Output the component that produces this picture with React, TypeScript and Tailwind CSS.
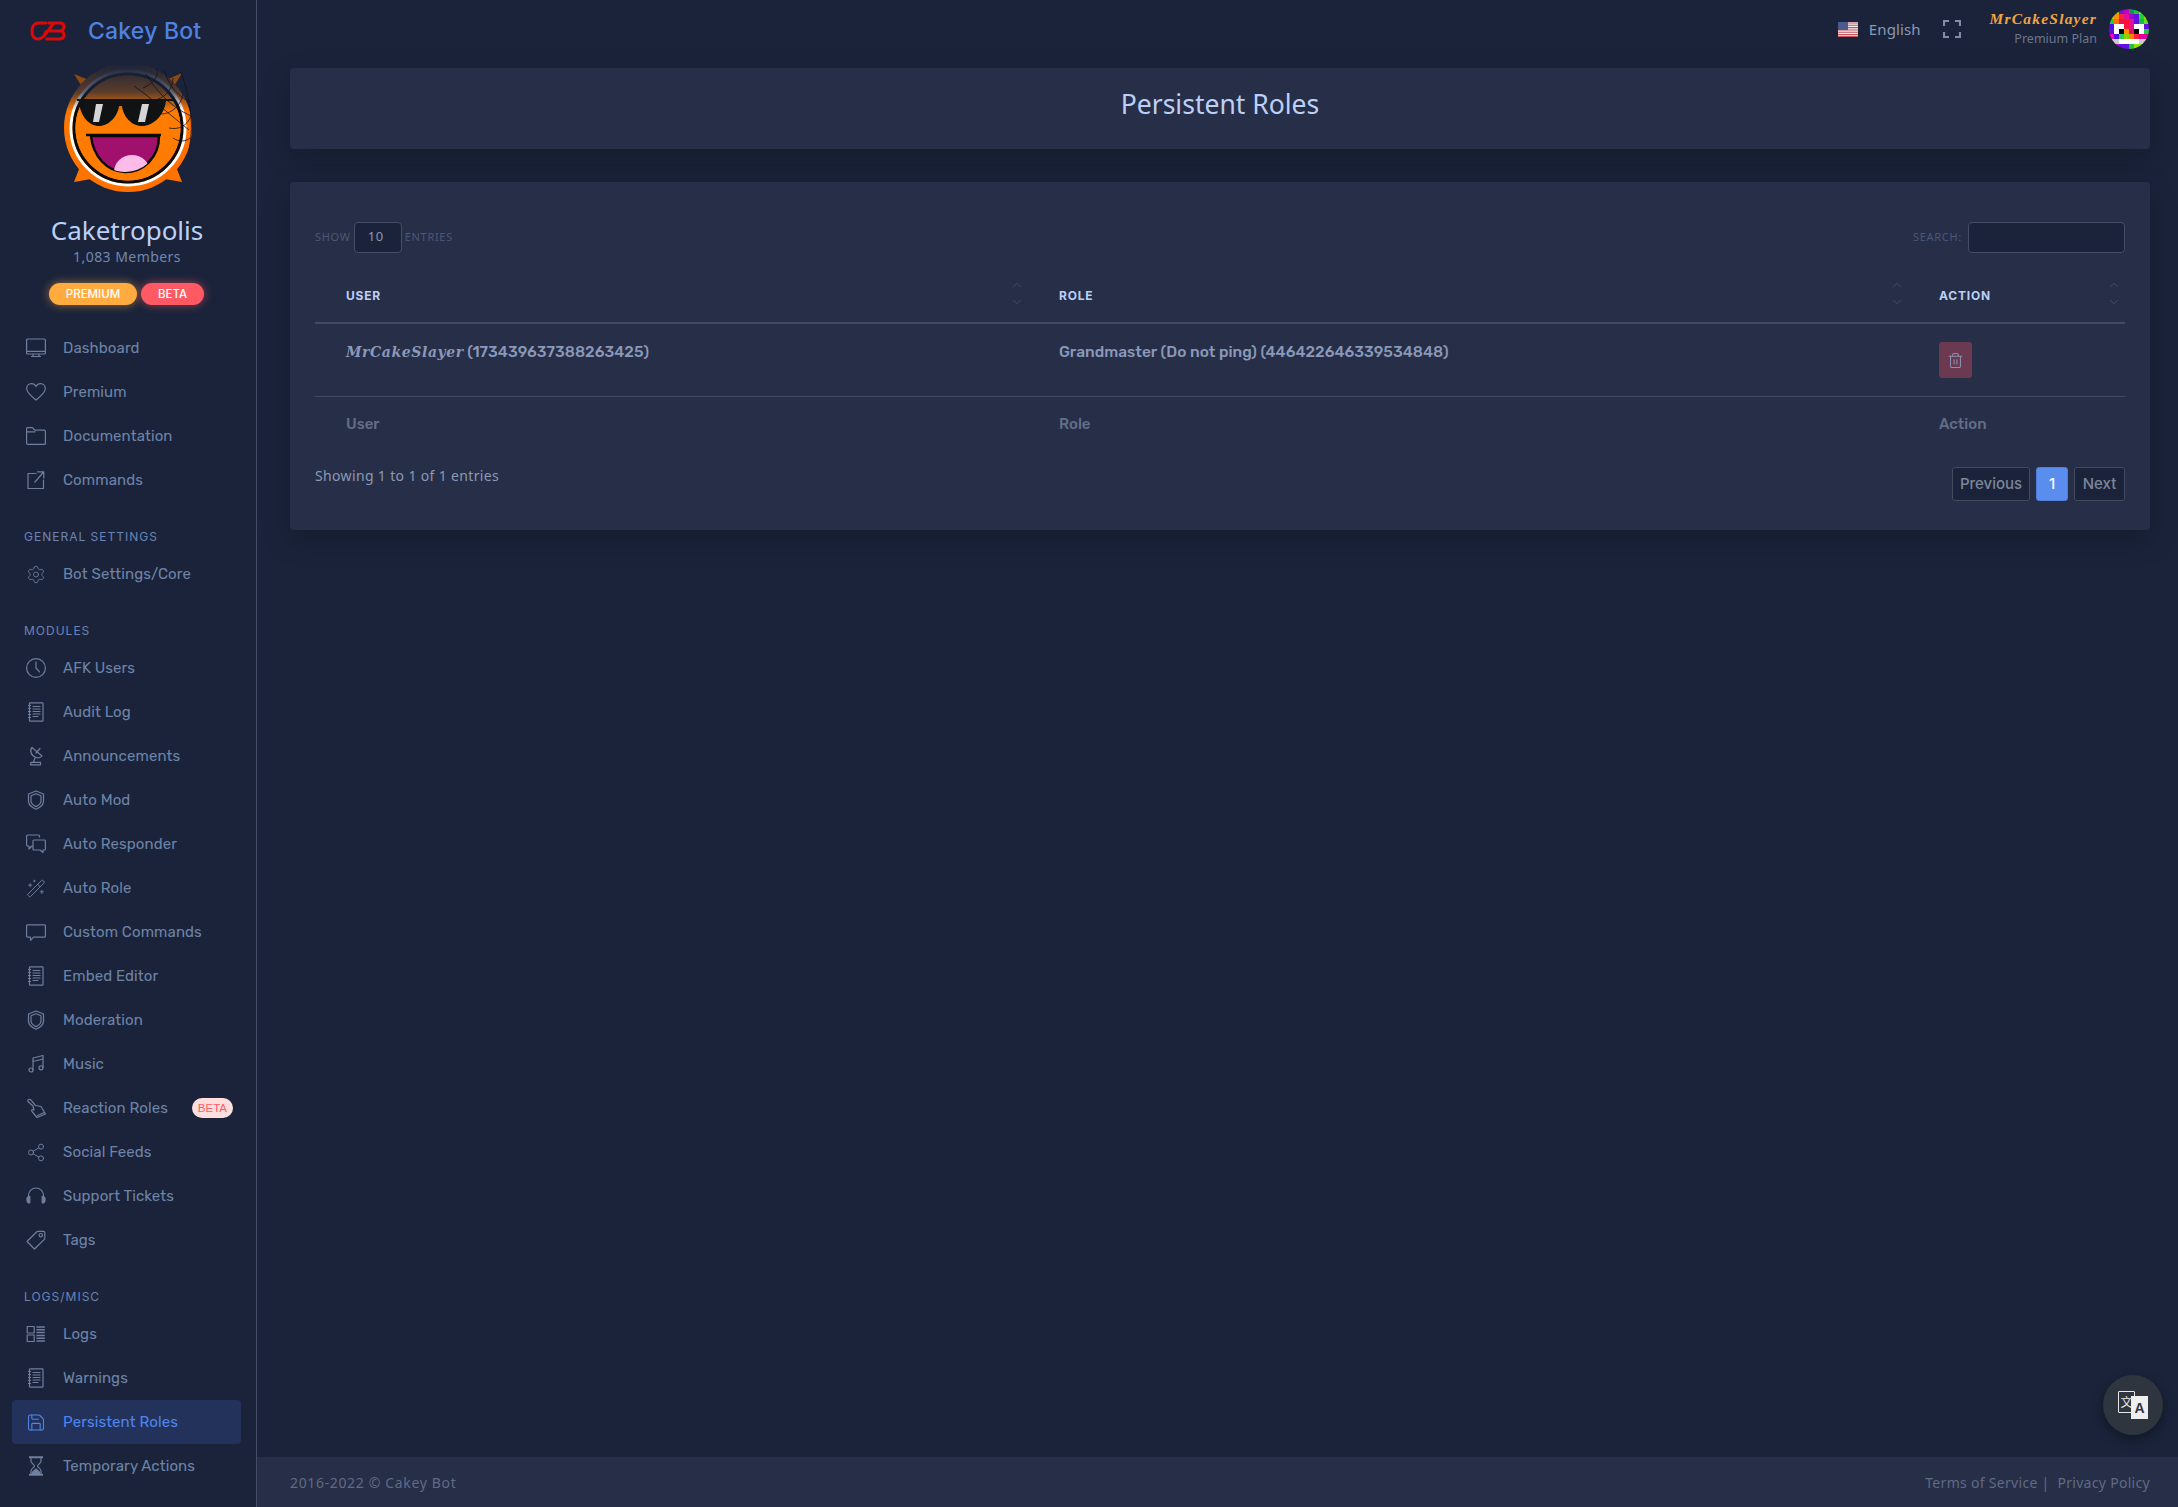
import React from "react";
import { Settings, WandSparkles, Share2, Save, ChevronUp, ChevronDown, Trash2 } from "lucide-react";

const S = ({ children }: { children: React.ReactNode }) => (
  <svg width="20" height="20" viewBox="0 0 20 20" fill="none" stroke="currentColor" strokeWidth="1.2" strokeLinecap="round" strokeLinejoin="round">{children}</svg>
);

const Notebook = () => (
  <S>
    <rect x="3.5" y="0.8" width="13.5" height="18.4" rx="0.8" />
    <path d="M2.5 3.5h2M2.5 6.5h2M2.5 9.5h2M2.5 12.5h2M2.5 15.5h2" />
    <path d="M7 4.5h7M7 7h7M7 9.5h7M7 12h7M7 14.5h5" />
  </S>
);
const ShieldI = () => (
  <S>
    <path d="M10 1 L17.5 4 V11 C17.5 15 13.5 17.8 10 19.2 C6.5 17.8 2.5 15 2.5 11 V4 Z" />
    <path d="M10 3.8 L15 5.8 V10.8 C15 13.6 12.3 15.6 10 16.6 C7.7 15.6 5 13.6 5 10.8 V5.8 Z" />
  </S>
);
const icons: Record<string, React.ReactNode> = {
  monitor: <S><rect x="0.6" y="1" width="18.8" height="15" rx="1" /><path d="M0.6 13.3h18.8M7 16v2M13 16v2M5.5 18.5h9" /></S>,
  heart: <S><path d="M10 18 C6 14.8 0.7 11 0.7 6.6 C0.7 3.5 3 1.6 5.5 1.6 C7.4 1.6 9 2.6 10 4.4 C11 2.6 12.6 1.6 14.5 1.6 C17 1.6 19.3 3.5 19.3 6.6 C19.3 11 14 14.8 10 18 Z" /></S>,
  folder: <S><path d="M0.6 17.2 V2.6 C0.6 2 1 1.6 1.6 1.6 H6.5 L8.5 4.2 H18 C18.8 4.2 19.4 4.8 19.4 5.6 V17.4 C19.4 18 19 18.4 18.4 18.4 H1.8 C1 18.4 0.6 18 0.6 17.2 Z" /><path d="M0.6 5.8 H9" /></S>,
  ext: <S><path d="M10 3.5 H2 V18.5 H17.5 V10" /><path d="M9 12 L17.5 2 M11.5 1.8 H17.8 V8" /></S>,
  gear: <Settings size={23} strokeWidth={1.05} />,
  clock: <S><circle cx="10" cy="10" r="9.4" /><path d="M10 3.8 V10 L13.5 13.8" /></S>,
  notebook: <Notebook />,
  dish: <S><path d="M6 1.5 C3.5 4.5 5 10 10 11.5 C12.5 12.2 15 11.5 16 10 Z" /><path d="M10 7 L14 2.5 M9 12 L7.5 16" /><path d="M4.5 18.8 H14.5 V16.3 H5 Z" /></S>,
  shield: <ShieldI />,
  chats: <S><path d="M13.5 3 V2 C13.5 1.4 13 1 12.5 1 H1.5 C1 1 0.6 1.4 0.6 2 V11 C0.6 11.5 1 12 1.5 12 H3 V15 L6 12 H7" /><path d="M8 6 H18.5 C19 6 19.4 6.4 19.4 7 V15 C19.4 15.6 19 16 18.5 16 H17 V18.5 L14 16 H8 C7.4 16 7 15.6 7 15 V7 C7 6.4 7.4 6 8 6 Z" /></S>,
  wand: <WandSparkles size={21} strokeWidth={1.15} />,
  msg: <S><path d="M1.6 2.8 H18.4 C19 2.8 19.4 3.2 19.4 3.8 V14.2 C19.4 14.8 19 15.2 18.4 15.2 H7.5 L4.5 18.3 V15.2 H1.6 C1 15.2 0.6 14.8 0.6 14.2 V3.8 C0.6 3.2 1 2.8 1.6 2.8 Z" /></S>,
  music: <S><path d="M7 16 V4 L17 1.5 V13.5 M7 7.5 L17 5" /><circle cx="5" cy="16" r="2" /><circle cx="15" cy="13.8" r="2" /></S>,
  hand: <S><path d="M2 3.5 C1.2 2 3.5 0.5 4.8 1.8 L9.5 7.5 L15 8.5 L19.5 16 L11 19.5 L6 13.5 C5 12 6.5 11 8 12 L7 8 Z" /><path d="M11.5 17.5 L18.5 14.5" /></S>,
  share: <Share2 size={21} strokeWidth={1.15} />,
  phones: <S><path d="M2.5 12 V9.5 C2.5 5 6 2 10 2 C14 2 17.5 5 17.5 9.5 V12" /><path d="M1 12.5 C1 11 2 10.5 3.8 10.5 V17 C2 17 1 16 1 14.5 Z M19 12.5 C19 11 18 10.5 16.2 10.5 V17 C18 17 19 16 19 14.5 Z" fill="currentColor" /></S>,
  tag: <S><path d="M1 11.5 L10.5 2 C11 1.5 11.5 1.3 12.2 1.3 H17.6 C18.3 1.3 18.8 1.8 18.8 2.5 V8 C18.8 8.6 18.6 9.2 18.1 9.6 L8.5 19 Z" /><circle cx="14.8" cy="5.2" r="1.7" /></S>,
  logs: <S><rect x="1.2" y="2.5" width="7" height="6.5" /><rect x="1.2" y="11" width="7" height="6.5" /><path d="M10.5 3h8.3M10.5 5.7h8.3M10.5 8.4h8.3M10.5 11.6h8.3M10.5 14.3h8.3M10.5 17h8.3" strokeWidth="1.5" strokeLinecap="butt" /></S>,
  save: <Save size={21} strokeWidth={1.3} />,
  hour: <S><path d="M3 1.2 H17 M3 18.8 H17" strokeWidth="2" strokeLinecap="butt" /><path d="M5 2 V5 C5 7.5 8.5 8.8 8.5 10 C8.5 11.2 5 12.5 5 15 V18 M15 2 V5 C15 7.5 11.5 8.8 11.5 10 C11.5 11.2 15 12.5 15 15 V18" /><path d="M6 17.5 C6 15.5 9 14.5 10 13 C11 14.5 14 15.5 14 17.5 Z" fill="currentColor" /></S>,
};

const NavItem = ({ icon, label, active, badge }: { icon: string; label: string; active?: boolean; badge?: boolean }) => (
  <div className={`flex h-11 items-center rounded-[4px] ml-3 mr-[15px] pl-[14px] pr-2 ${active ? "bg-[#22325a] text-[#4f85ef]" : "text-[#6d83a8]"}`}>
    <span className={`flex w-5 h-5 items-center justify-center shrink-0 ${active ? "text-[#4f85ef]" : "text-[#6f7f9d]"}`}>{icons[icon]}</span>
    <span className="ml-[17px] text-[15px] font-['Rubik','Inter',sans-serif] tracking-[0.1px]">{label}</span>
    {badge && (
      <span className="ml-auto rounded-full bg-[#ffdfdd] text-[#ff5a64] text-[11.5px] leading-[20px] h-5 px-[6px] font-['Liberation_Sans',sans-serif]">BETA</span>
    )}
  </div>
);

const Heading = ({ children }: { children: React.ReactNode }) => (
  <div className="mx-[24px] mt-[26px] mb-[7px] h-[17px] leading-[17px] text-[12px] tracking-[1px] text-[#6d83b3] font-['Inter',sans-serif]">{children}</div>
);

const GuildAvatar = () => (
  <svg width="128" height="127" viewBox="33 15 128 127">
    <defs>
      <radialGradient id="og" cx="0.45" cy="0.45" r="0.7">
        <stop offset="0" stopColor="#ff8a00" />
        <stop offset="1" stopColor="#ff6a00" />
      </radialGradient>
      <linearGradient id="fade" x1="0" y1="0" x2="0" y2="1">
        <stop offset="0" stopColor="#1a233a" stopOpacity="1" />
        <stop offset="0.22" stopColor="#1a233a" stopOpacity="0.72" />
        <stop offset="0.37" stopColor="#1a233a" stopOpacity="0" />
      </linearGradient>
      <clipPath id="mouthClip"><path d="M60 86 H128 C128 108 112 122 94 122 C76 122 62 106 60 86 Z" /></clipPath>
    </defs>
    <path d="M43 24 L68 34 L58 48 Z M151 23 L126 34 L136 48 Z" fill="#8b4a10" />
    <path d="M43 132 L50 114 L66 128 Z M151 132 L144 114 L128 128 Z" fill="#ff7400" />
    <circle cx="97" cy="78" r="64" fill="url(#og)" />
    <circle cx="97" cy="78" r="57" fill="none" stroke="#ffffff" strokeWidth="3" />
    <circle cx="97" cy="78" r="54" fill="none" stroke="#0a0a0a" strokeWidth="3" />
    <circle cx="97" cy="78" r="52.5" fill="#ff7c00" />
    <circle cx="97" cy="78" r="64.5" fill="url(#fade)" />
    <path d="M46 49 H142 V51 H135 C133 66 122 76 111 76 C100 76 92 66 91 56 H88 C87 66 78 76 68 76 C58 76 49 66 48 51 H46 Z" fill="#101214" />
    <path d="M65 54 H72 L68 72 H62 Z M111 54 H118 L114 72 H107 Z" fill="#d5d5d5" />
    <path d="M60 86 H128 C128 108 112 122 94 122 C76 122 62 106 60 86 Z" fill="#a0106c" stroke="#0a0a0a" strokeWidth="2.5" />
    <path d="M55 85 H130" stroke="#0a0a0a" strokeWidth="2.5" />
    <g clipPath="url(#mouthClip)"><ellipse cx="101" cy="122" rx="18" ry="17" fill="#fdbbe9" /></g>
    <g fill="none" stroke="#0d1322" strokeWidth="0.8">
      <path d="M103 36 C120 48 131 58 158 80 M115 24 C125 40 138 56 160 66 M133 20 C138 36 148 48 160 52" />
      <path d="M126 19 C128 26 122 34 112 38 M142 28 C142 40 132 50 122 50 M152 44 C150 56 140 64 130 64 M160 66 C156 76 148 80 138 78 M159 88 C154 92 148 92 142 88" />
      <path d="M150 22 C154 34 158 48 160 66 C161 78 160 90 158 100" />
    </g>
  </svg>
);

const px = [
  ["#22c55e", "#76d80e", "#7a10e0", "#c000c0", "#1a9050", "#20c040", "#90e000", "#30c030"],
  ["#9ee000", "#ff9000", "#ff2040", "#e0109a", "#a000d0", "#6010e0", "#20d040", "#90e000"],
  ["#20d040", "#ff7000", "#f01050", "#ff1030", "#e010a0", "#6010e0", "#10c040", "#60e020"],
  ["#5010e0", "#ffffff", "#ffffff", "#ff1040", "#e01090", "#ffffff", "#ffffff", "#6010e0"],
  ["#6010e0", "#ffffff", "#000000", "#ff9000", "#e01060", "#000000", "#ffffff", "#20d040"],
  ["#ff00c0", "#5010e0", "#20d060", "#90d000", "#ff8000", "#ff2040", "#e000a0", "#e000a0"],
  ["#cccccc", "#cccccc", "#ffffff", "#ffffff", "#ffffff", "#ffffff", "#cccccc", "#cccccc"],
  ["#ff00ff", "#c000e0", "#6010e0", "#6010e0", "#20c040", "#90e000", "#90e000", "#a0e000"],
];

const SortCaret = () => (
  <span className="absolute right-[4px] top-[12px] flex flex-col text-[#424d6a]">
    <ChevronUp size={14} strokeWidth={1.6} />
    <span className="h-[3px]" />
    <ChevronDown size={14} strokeWidth={1.6} />
  </span>
);

const rubik = "font-['Rubik','Inter',sans-serif]";

const PageBtn = ({ children, cls }: { children: React.ReactNode; cls: string }) => (
  <span className={`h-[34px] flex items-center justify-center rounded-[3px] border text-[15px] font-medium font-['Inter',sans-serif] ${cls}`}>{children}</span>
);

export default function App() {
  return (
    <div className="flex h-screen w-full overflow-hidden bg-[#1a233a] font-['Noto_Sans',sans-serif]">
      <aside className="w-[257px] shrink-0 border-r border-[#434e66] flex flex-col">
        <div className="h-[62px] flex items-center pl-[30px]">
          <svg width="36" height="22" viewBox="30 20 36 22" fill="none" stroke="#d80a0a" strokeWidth="3.2" strokeLinecap="round" strokeLinejoin="round">
            <path d="M46 23 H39 C34 23 32 27 32 31 C32 36 34 39 38 39 C42 39 45 35 46 32" />
            <path d="M54 23 L44 36 M49 23 H60 C63 23 64 25 64 27 C64 29 62 31 60 31 H51 M60 31 C63 31 64 33 64 35 C64 38 62 39 59 39 H47" />
          </svg>
          <span className="ml-[22px] text-[23px] font-medium text-[#4f82e0] font-['Inter',sans-serif] tracking-[0.2px]">Cakey Bot</span>
        </div>
        <div className="mt-[3px] flex justify-center pr-[1px]"><GuildAvatar /></div>
        <div className="mt-[20px] pr-[2px] text-center text-[26px] leading-[36px] text-[#bcd0f7]">Caketropolis</div>
        <div className="pr-[2px] text-center text-[14px] leading-[18px] text-[#7188ac] tracking-[0.45px]">1,083 Members</div>
        <div className="mt-[17px] flex justify-center gap-[4px] font-['Inter',sans-serif] font-medium text-[11.5px] text-white pr-[3px]">
          <span className="w-[88px] h-[22px] leading-[22px] text-center rounded-full bg-[#ffab40] shadow-[0_0_10px_rgba(255,171,64,0.55)]">PREMIUM</span>
          <span className="w-[63px] h-[22px] leading-[22px] text-center rounded-full bg-[#ff5a64] shadow-[0_0_10px_rgba(255,90,100,0.55)]">BETA</span>
        </div>
        <nav className="mt-[21px]">
          <NavItem icon="monitor" label="Dashboard" />
          <NavItem icon="heart" label="Premium" />
          <NavItem icon="folder" label="Documentation" />
          <NavItem icon="ext" label="Commands" />
          <Heading>GENERAL SETTINGS</Heading>
          <NavItem icon="gear" label="Bot Settings/Core" />
          <Heading>MODULES</Heading>
          <NavItem icon="clock" label="AFK Users" />
          <NavItem icon="notebook" label="Audit Log" />
          <NavItem icon="dish" label="Announcements" />
          <NavItem icon="shield" label="Auto Mod" />
          <NavItem icon="chats" label="Auto Responder" />
          <NavItem icon="wand" label="Auto Role" />
          <NavItem icon="msg" label="Custom Commands" />
          <NavItem icon="notebook" label="Embed Editor" />
          <NavItem icon="shield" label="Moderation" />
          <NavItem icon="music" label="Music" />
          <NavItem icon="hand" label="Reaction Roles" badge />
          <NavItem icon="share" label="Social Feeds" />
          <NavItem icon="phones" label="Support Tickets" />
          <NavItem icon="tag" label="Tags" />
          <Heading>LOGS/MISC</Heading>
          <NavItem icon="logs" label="Logs" />
          <NavItem icon="notebook" label="Warnings" />
          <NavItem icon="save" label="Persistent Roles" active />
          <NavItem icon="hour" label="Temporary Actions" />
        </nav>
      </aside>

      <main className="flex-1 min-w-0 flex flex-col relative">
        <header className="h-[68px] shrink-0 flex items-center justify-end pr-[29px] pb-[10px]">
          <svg width="20" height="15" viewBox="0 0 20 15" className="mt-[1px]">
            <rect width="20" height="15" fill="#eeeeee" />
            <path d="M0 1h20M0 3.3h20M0 5.6h20M0 8h20M0 10.3h20M0 12.6h20M0 14.6h20" stroke="#c4555f" strokeWidth="1.1" />
            <rect width="10" height="8" fill="#4a5a8c" />
          </svg>
          <span className="ml-[11px] text-[15px] tracking-[0.1px] text-[#8a99b5]">English</span>
          <svg width="18" height="18" viewBox="0 0 18 18" fill="none" stroke="#7d8dab" strokeWidth="2.2" className="ml-[22px]">
            <path d="M1 6 V1 H6 M12 1 H17 V6 M17 12 V17 H12 M6 17 H1 V12" />
          </svg>
          <div className="ml-[29px] mr-[-1px] flex flex-col items-end">
            <span className="text-[15.5px] leading-[20px] font-bold italic text-[#f0a540] tracking-[1.2px] font-['Liberation_Serif',serif]">MrCakeSlayer</span>
            <span className="text-[12.5px] leading-[20px] text-[#6b778f]">Premium Plan</span>
          </div>
          <svg width="40" height="40" viewBox="0 0 8 8" shapeRendering="crispEdges" className="ml-[13px] rounded-full">
            {px.flatMap((row, y) => row.map((c, x) => <rect key={`${x}-${y}`} x={x} y={y} width="1" height="1" fill={c} />))}
          </svg>
        </header>

        <div className="flex-1 min-h-0 pl-[33px] pr-[28px]">
          <section className="h-[81px] rounded-[4px] bg-[#272e48] flex items-center justify-center pb-[8px] shadow-[0_10px_30px_rgba(0,0,0,0.2)]">
            <h1 className="text-[26.5px] text-[#bcd0f7]">Persistent Roles</h1>
          </section>

          <section className="mt-[33px] h-[348px] rounded-[4px] bg-[#272e48] px-[25px] pt-[40px] shadow-[0_10px_30px_rgba(0,0,0,0.2)]">
            <div className="flex items-center justify-between h-[30px]">
              <div className="flex items-center text-[11px] tracking-[0.7px] text-[#4a5876]">
                <span>SHOW</span>
                <span className="mx-[3px] w-[48px] h-[31px] pl-[13px] flex items-center rounded-[4px] border border-[#434e66] bg-[#1a233a] text-[#8a99b5] text-[13px]">10</span>
                <span>ENTRIES</span>
              </div>
              <div className="flex items-center text-[11px] tracking-[0.7px] text-[#4a5876]">
                <span>SEARCH:</span>
                <span className="ml-[6px] w-[157px] h-[31px] rounded-[4px] border border-[#434e66] bg-[#1a233a]" />
              </div>
            </div>

            <table className="mt-[14px] w-full table-fixed border-collapse">
              <colgroup>
                <col className="w-[713px]" />
                <col className="w-[880px]" />
                <col />
              </colgroup>
              <thead>
                <tr className="h-[57px] border-b-2 border-[#434b60]">
                  {["USER", "ROLE", "ACTION"].map((t) => (
                    <th key={t} className="relative text-left pl-[31px] pt-[3px] text-[12px] font-bold tracking-[0.8px] text-[#bcd0f7] font-['Inter',sans-serif]">
                      {t}
                      <SortCaret />
                    </th>
                  ))}
                </tr>
              </thead>
              <tbody>
                <tr className="h-[73px] border-b border-[#434b60] align-top">
                  <td className={`pl-[31px] pt-[17px] text-[15.5px] font-medium text-[#8a99b9] ${rubik}`}>
                    <span className="font-['DejaVu_Serif',serif] text-[14px] italic font-bold tracking-[0.6px]">MrCakeSlayer</span> (173439637388263425)
                  </td>
                  <td className={`pl-[31px] pt-[17px] text-[15.5px] font-medium text-[#8a99b9] ${rubik}`}>Grandmaster (Do not ping) (446422646339534848)</td>
                  <td className="pl-[31px] pt-[18px]">
                    <span className="w-[33px] h-[36px] rounded-[3px] bg-[#6b3a50] text-[#8c8fb0] flex items-center justify-center">
                      <Trash2 size={17} strokeWidth={1.5} />
                    </span>
                  </td>
                </tr>
              </tbody>
              <tfoot>
                <tr className={`h-[54px] text-[15px] font-medium text-[#626e88] ${rubik}`}>
                  <td className="pl-[31px] pt-[2px]">User</td>
                  <td className="pl-[31px] pt-[2px]">Role</td>
                  <td className="pl-[31px] pt-[2px]">Action</td>
                </tr>
              </tfoot>
            </table>

            <div className="flex items-start justify-between">
              <span className="mt-[16px] text-[14px] leading-[20px] tracking-[0.35px] text-[#8a99b5]">Showing 1 to 1 of 1 entries</span>
              <div className="mt-[17px] flex gap-[6px]">
                <PageBtn cls="w-[78px] border-[#434b60] bg-[#1a233a] text-[#7d8699]">Previous</PageBtn>
                <PageBtn cls="w-[32px] border-[#4f7fd8] bg-[#5a8dee] text-white font-bold">1</PageBtn>
                <PageBtn cls="w-[51px] border-[#434b60] bg-[#1a233a] text-[#7d8699]">Next</PageBtn>
              </div>
            </div>
          </section>
        </div>

        <footer className="h-[50px] shrink-0 bg-[#272e48] flex items-center justify-between pl-[33px] pr-[28px] text-[14px] text-[#5f6b85]">
          <span className="tracking-[0.65px]">2016-2022 © Cakey Bot</span>
          <span className="tracking-[0.3px]">Terms of Service |&nbsp; Privacy Policy</span>
        </footer>

        <div className="absolute right-[15px] bottom-[72px] w-[60px] h-[60px] rounded-full bg-[#2e353f] shadow-[0_4px_12px_rgba(0,0,0,0.35)]">
          <span className="absolute left-[15px] top-[16px] w-[17px] h-[22px] rounded-[1px] border border-[#e8e8e8] text-[#e8e8e8] text-[12px] leading-[20px] text-center font-['Noto_Sans_CJK_SC',sans-serif]">文</span>
          <span className="absolute left-[28px] top-[21px] w-[17px] h-[23px] bg-[#eeeeee] text-[#2e353f] text-[14px] font-bold leading-[24px] text-center font-['Liberation_Sans',sans-serif]">A</span>
        </div>
      </main>
    </div>
  );
}
